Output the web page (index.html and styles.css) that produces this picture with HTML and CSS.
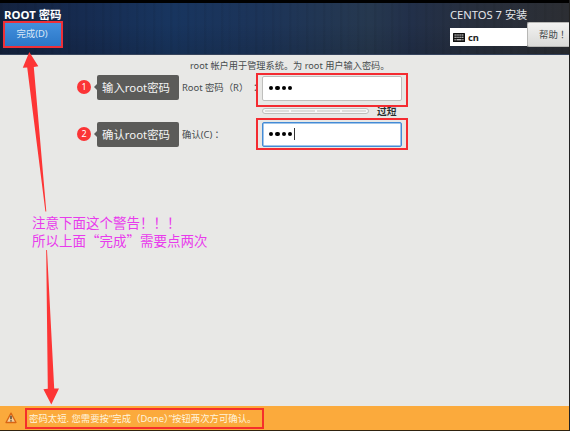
FILE: index.html
```html
<!DOCTYPE html>
<html lang="zh-CN">
<head>
<meta charset="utf-8">
<title>ROOT 密码</title>
<link rel="stylesheet" href="styles.css">
</head>
<body>
<div class="screen">
  <header class="header">
    <div class="header-left">
      <h1 class="title">ROOT 密码</h1>
      <button class="done">完成(D)</button>
    </div>
    <div class="header-right">
      <div class="product">CENTOS 7 安装</div>
      <div class="tools">
        <div class="layout">
          <svg width="12" height="9" viewBox="0 0 12 9"><rect width="12" height="9" rx=".5" fill="#111"/><path d="M1.5 2h9M1.5 4.3h9" stroke="#fff" stroke-width="1.1" stroke-dasharray="1.3 .6"/><path d="M1.5 6.8h1.2M3.5 6.8h5M9.3 6.8h1.2" stroke="#fff"/></svg>
          <span>cn</span>
        </div>
        <button class="help">帮助<span class="wide" lang="zh-TW">！</span></button>
      </div>
    </div>
  </header>

  <main class="main">
    <p class="intro">root 帐户用于管理系统。为 root 用户输入密码。</p>
    <div class="form">
      <div class="row">
        <span class="badge">1</span><span class="tip">输入root密码</span>
        <label class="label">Root 密码（R） <span class="wide" lang="zh-TW">：</span></label>
        <div class="frame first"><div class="field"><i></i><i></i><i></i><i></i></div></div>
      </div>
      <div class="strength">
        <div class="meter"><b></b><b></b><b></b><b></b></div>
        <span class="verdict">过短</span>
      </div>
      <div class="row second-row">
        <span class="badge">2</span><span class="tip">确认root密码</span>
        <label class="label">确认(C)<span class="wide" lang="zh-TW">：</span></label>
        <div class="frame second"><div class="field focus"><i></i><i></i><i></i><i></i><span class="caret"></span></div></div>
      </div>
    </div>
    <div class="note"><p>注意下面这个警告！！！</p><p>所以上面<span class="quote">“</span>完成<span class="quote">”</span>需要点两次</p></div>
  </main>

  <footer class="footer">
    <svg class="warn" width="12" height="12" viewBox="0 0 12 12"><path d="M6 1.1 11 10.5H1Z" fill="#f5cf9b" stroke="#d96513" stroke-width="1.3" stroke-linejoin="round"/><path d="M6 3.8v3.4M6 8.2v1.3" stroke="#4d3c2b" stroke-width="1.4"/></svg>
    <div class="message">密码太短. 您需要按“完成（Done）”按钮两次方可确认。</div>
  </footer>

  <svg class="arrows" width="570" height="431" viewBox="0 0 570 431" fill="#fd3535">
    <path d="M29.3 52 38.3 66.3 33.8 67 46.3 211.5H45.4L27.2 67.4 22.8 67.8Z"/>
    <path d="M46.2 250H47L54.2 388.6 59 388.5 51.3 404.5 43.4 389.2 47.8 388.8Z"/>
  </svg>
</div>
</body>
</html>
```

FILE: styles.css
```css
* { box-sizing: border-box; }
body { margin: 0; font-family: "Noto Sans", "Noto Sans CJK SC", sans-serif; font-size: 9.4px; color: #464b4d; }
h1, p { margin: 0; font-weight: normal; }
button { font: inherit; padding: 0; margin: 0; }
.screen { position: relative; width: 570px; height: 431px; display: flex; flex-direction: column; background: #e8e8e6; border-right: 1px solid #222; overflow: hidden; white-space: nowrap; }
.wide { font-family: "Noto Sans CJK TC", sans-serif; line-height: 1; }
.header {
  height: 55px; flex: none; display: flex; justify-content: space-between;
  border-top: 3px solid #000; border-bottom: 1px solid #35435c;
  background:
    repeating-linear-gradient(90deg, rgba(0,0,0,.05) 0 2px, transparent 3px 7px, rgba(0,0,0,.03) 8px 9px, transparent 11px 17px),
    linear-gradient(180deg, rgba(0,0,0,0) 40%, rgba(0,0,0,.12)),
    linear-gradient(90deg, #14233f 0, #162b50 80px, #18355f 170px, #1c3459 260px, #26384f 370px, #22304a 410px, #272f3e 470px, #2c2e33 570px);
}
.header-left { padding: 4px 0 0 3px; }
.title { height: 14px; line-height: 15px; padding-left: 1px; font-size: 11.4px; font-weight: bold; color: #fff; }
.done { display: block; width: 60px; height: 27px; border: 2px solid #ee3038; background: linear-gradient(#438fdd, #2b77c6); color: #d8e7f7; font-size: 9.4px; line-height: 20px; padding: 0 2px 1px 0; }
.header-right { width: 120px; padding-top: 4px; margin-right: -1px; }
.product { height: 15px; line-height: 16px; font-size: 11.2px; color: #e4e6e9; }
.tools { display: flex; }
.layout { display: flex; align-items: center; gap: 3px; width: 77px; height: 18px; margin-top: 6px; padding-left: 3px; background: #fff; color: #222; font-weight: bold; font-size: 9.4px; line-height: 17px; }
.help { width: 43px; height: 25px; border: 1px solid #b7b7b5; border-right: 0; border-radius: 2px 0 0 2px; background: linear-gradient(#f2f2f1, #dadad8); color: #41474a; font-size: 9.4px; padding: 0 0 2px 11px; text-align: left; }
.main { flex: 1; display: flex; flex-direction: column; }
.intro { height: 18px; padding-left: 190px; line-height: 22px; font-size: 9.2px; }
.form { padding-left: 77px; }
.row { display: flex; height: 33px; }
.badge { width: 14px; height: 14px; margin: 7px 6px 0 0; border-radius: 50%; background: #fb3436; color: #fff; font-size: 9px; line-height: 14px; text-align: center; }
.tip { position: relative; width: 82px; height: 25px; margin-top: 2px; border-radius: 2px; background: #5b5b59; color: #f4f4f4; font-size: 11.4px; line-height: 25px; padding-left: 5px; }
.tip::before { content: ""; position: absolute; left: -3px; top: 9px; border: solid transparent; border-width: 3px 3px 3px 0; border-right-color: #5b5b59; }
.label { width: 77px; padding-left: 3px; line-height: 30px; }
.frame { position: relative; width: 152px; height: 34px; border: 2px solid #f42b31; padding: 1px 4px; }
.field { display: flex; align-items: center; gap: 2.2px; width: 140px; height: 25px; padding: 0 0 1px 6px; border: 1px solid #bfbfbd; border-radius: 2px; background: #fff; }
.field i { width: 4.2px; height: 4.2px; border-radius: 50%; background: #000; }
.focus { border: 1px solid #438bd6; box-shadow: inset 0 0 0 .5px #438bd6; }
.caret { width: 1px; height: 12px; margin-left: -1px; background: #333; }
.strength { display: flex; height: 12px; padding-left: 185px; }
.meter { display: flex; align-items: center; gap: 2px; width: 107px; height: 6px; margin-top: 2px; padding: 0 2px; border: 1px solid #bebebc; border-radius: 3px; background: #f8f8f8; }
.meter b { flex: 1; height: 2px; background: #dededc; }
.verdict { margin-left: 8px; line-height: 12px; font-size: 9.8px; font-weight: bold; color: #292d2e; }
.second { height: 32px; padding-top: 2px; }
.second-row .badge { margin-top: 9px; }
.second-row .tip { margin-top: 4px; }
.second-row .label { line-height: 33px; }
.note { margin-top: 64px; padding-left: 32px; font-family: "Liberation Serif", "Noto Sans CJK SC", serif; font-weight: 300; font-size: 13.5px; line-height: 17.5px; color: #e83bed; }
.quote { font-family: "Noto Sans CJK SC", sans-serif; line-height: 1; }
.footer { height: 25px; flex: none; display: flex; background: #fbaa3c; border-bottom: 1px solid #30230f; }
.warn { margin: 6px 8px 0 5px; }
.message { width: 239px; height: 21px; margin-top: 2px; border: 2px solid #f52f2b; padding-left: 2px; font-size: 9.4px; line-height: 17px; color: #fff4df; }
.arrows { position: absolute; left: 0; top: 0; pointer-events: none; }
```
